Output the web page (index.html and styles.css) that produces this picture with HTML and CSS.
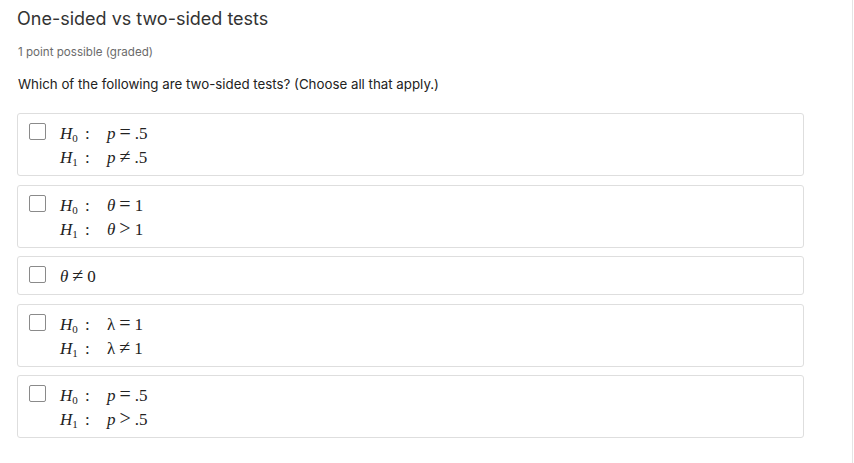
FILE: index.html
```html
<!DOCTYPE html>
<html>
<head>
<meta charset="utf-8">
<link rel="stylesheet" href="styles.css">
</head>
<body>
<div class="page">
  <div class="problem">
    <h2 class="title">One-sided vs two-sided tests</h2>
    <div class="points">1 point possible (graded)</div>
    <p class="question">Which of the following are two-sided tests? (Choose all that apply.)</p>
    <div class="choices">
      <label class="choice">
        <span class="box"></span>
        <span class="math">
          <span class="row"><span class="lhs"><i>H</i><sub>0</sub></span><span class="colon">:</span><span class="rhs"><i>p</i><span class="op">=</span>.5</span></span>
          <span class="row"><span class="lhs"><i>H</i><sub>1</sub></span><span class="colon">:</span><span class="rhs"><i>p</i><span class="op">&ne;</span>.5</span></span>
        </span>
      </label>
      <label class="choice">
        <span class="box"></span>
        <span class="math">
          <span class="row"><span class="lhs"><i>H</i><sub>0</sub></span><span class="colon">:</span><span class="rhs"><i>&theta;</i><span class="op">=</span>1</span></span>
          <span class="row"><span class="lhs"><i>H</i><sub>1</sub></span><span class="colon">:</span><span class="rhs"><i>&theta;</i><span class="op">&gt;</span>1</span></span>
        </span>
      </label>
      <label class="choice">
        <span class="box"></span>
        <span class="math">
          <span class="row"><span class="single"><i>&theta;</i><span class="op">&ne;</span>0</span></span>
        </span>
      </label>
      <label class="choice">
        <span class="box"></span>
        <span class="math">
          <span class="row"><span class="lhs"><i>H</i><sub>0</sub></span><span class="colon">:</span><span class="rhs">&lambda;<span class="op">=</span>1</span></span>
          <span class="row"><span class="lhs"><i>H</i><sub>1</sub></span><span class="colon">:</span><span class="rhs">&lambda;<span class="op">&ne;</span>1</span></span>
        </span>
      </label>
      <label class="choice">
        <span class="box"></span>
        <span class="math">
          <span class="row"><span class="lhs"><i>H</i><sub>0</sub></span><span class="colon">:</span><span class="rhs"><i>p</i><span class="op">=</span>.5</span></span>
          <span class="row"><span class="lhs"><i>H</i><sub>1</sub></span><span class="colon">:</span><span class="rhs"><i>p</i><span class="op">&gt;</span>.5</span></span>
        </span>
      </label>
    </div>
  </div>
</div>
</body>
</html>
```
FILE: styles.css
```css
* { box-sizing: border-box; }
html, body { margin: 0; padding: 0; background: #fff; }
body { font-family: Inter, "Open Sans", sans-serif; color: #313131; }
.page {
  width: 853px;
  height: 463px;
  border-right: 1px solid #e4e4e4;
  overflow: hidden;
}
.problem { padding: 0 0 0 17px; width: 804px; }
.title {
  margin: 0;
  padding-top: 8px;
  font-size: 18px;
  font-weight: 400;
  line-height: 22px;
  color: #333;
}
.points {
  margin-top: 15px;
  font-size: 11.6px;
  line-height: 14px;
  color: #6b6b6b;
  padding-left: 1px;
}
.question {
  margin: 17px 0 0 1px;
  font-size: 13.3px;
  line-height: 16px;
  color: #222;
}
.choices {
  margin-top: 21px;
  display: flex;
  flex-direction: column;
  gap: 8.5px;
}
.choice {
  display: flex;
  align-items: flex-start;
  gap: 14px;
  border: 1px solid #dedede;
  border-radius: 3px;
  padding: 6px 11px 7px;
}
.box {
  flex: none;
  width: 17px;
  height: 17px;
  margin-top: 3px;
  border: 1px solid #8a8a8a;
  border-radius: 2px;
  background: #fff;
}
.math {
  display: flex;
  flex-direction: column;
  font-family: "Liberation Serif", serif;
  font-size: 17px;
  color: #222;
}
.row {
  display: flex;
  align-items: baseline;
  height: 24px;
  line-height: 24px;
}
.math i { font-style: italic; font-size: 17px; }
.lhs { width: 25px; }
.lhs sub { font-size: 11px; vertical-align: -3px; line-height: 0; }
.colon { width: 22px; }
.op { margin: 0 4px 0 4px; font-size: 20px; line-height: 24px; }
```
